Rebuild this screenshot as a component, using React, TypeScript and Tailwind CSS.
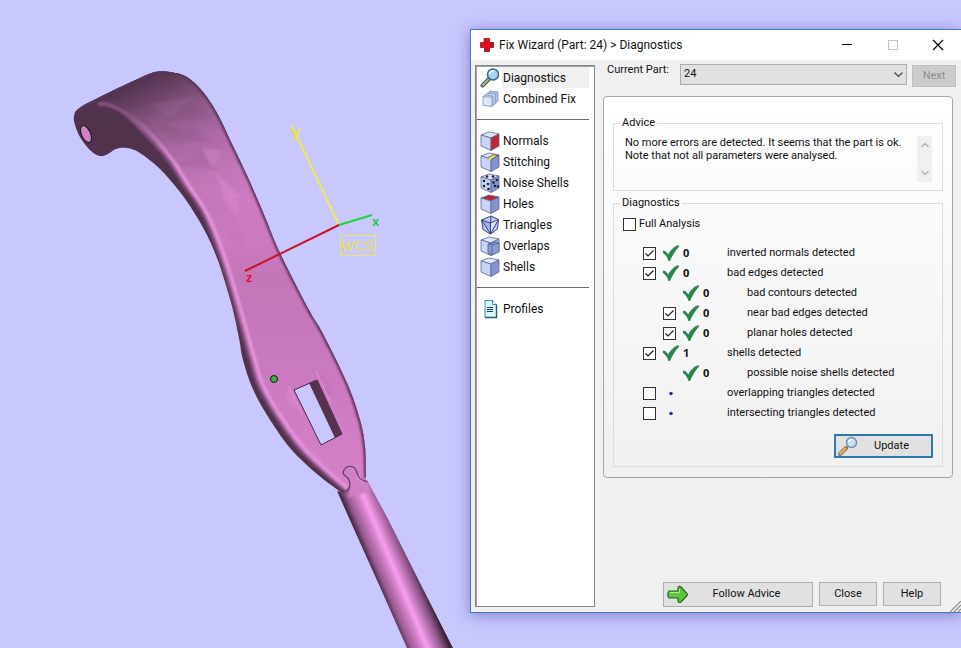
import React from 'react'

type Point = [number, number]

// smooth curve through a list of points
const curve = (points: Point[]) => {
  let d = ''
  for (let i = 0; i < points.length - 1; i++) {
    const a = points[i - 1] || points[i]
    const b = points[i]
    const c = points[i + 1]
    const e = points[i + 2] || c
    d += ` C${b[0] + (c[0] - a[0]) / 6} ${b[1] + (c[1] - a[1]) / 6} ${c[0] - (e[0] - b[0]) / 6} ${c[1] - (e[1] - b[1]) / 6} ${c[0]} ${c[1]}`
  }
  return d
}

const rightEdge: Point[] = [
  [75, 112], [84, 105], [112, 91], [140, 78], [155, 72], [170, 72], [187, 77], [203, 92], [217, 113], [233, 146],
  [250, 182], [265, 217], [280, 253], [309, 310], [322, 332], [347, 383], [360, 420], [365, 447], [366, 478],
]

const leftEdge: Point[] = [
  [342, 493], [317, 474], [290, 448], [267, 415], [252, 387], [243, 360], [239, 338], [233, 310], [225, 282],
  [217, 258], [207, 235], [195, 214], [180, 192], [160, 169], [140, 153], [127, 148], [116, 149], [108, 154],
  [100, 156], [91, 151], [80, 137], [74, 121], [75, 112],
]

const ridge: Point[] = [
  [98, 104], [109, 105], [123, 112], [139, 127], [156, 145], [170, 162], [185, 186], [201, 209], [213, 236],
  [224, 267], [234, 300], [242, 329], [251, 361], [259, 386], [276, 416], [299, 448], [326, 474], [345, 490],
]

const ridgeLight: Point[] = [
  [118, 107], [130, 114], [143, 126], [159, 143], [174, 162], [188, 184], [205, 210], [217, 236], [228, 267],
  [238, 300], [246, 328], [255, 360], [263, 385], [280, 415], [303, 447], [330, 473], [347, 488],
]

const bodyPath = `M75 112${curve(rightEdge)} L342 493${curve(leftEdge)} Z`
const facePath = `M98 104${curve(ridge)} L366 478${curve([...rightEdge.slice(2)].reverse())} Z`

const ModelView = () => {
  return (
    <svg
      className="absolute inset-0 h-full w-full"
      viewBox="0 0 961 648"
      preserveAspectRatio="xMinYMin slice"
      role="img"
      aria-label="3D part view"
    >
      <defs>
        <linearGradient id="face" gradientUnits="userSpaceOnUse" x1="136" y1="80" x2="206" y2="224">
          <stop offset="0" stopColor="#50324e" />
          <stop offset="0.12" stopColor="#664062" />
          <stop offset="0.3" stopColor="#8e5888" />
          <stop offset="0.5" stopColor="#ab68a3" />
          <stop offset="0.75" stopColor="#c276b8" />
          <stop offset="1" stopColor="#cd7bc2" />
        </linearGradient>
        <linearGradient id="lower" gradientUnits="userSpaceOnUse" x1="0" y1="210" x2="0" y2="480">
          <stop offset="0" stopColor="#cd7bc2" stopOpacity="0" />
          <stop offset="0.25" stopColor="#c376b8" />
          <stop offset="0.65" stopColor="#cb7ac1" />
          <stop offset="1" stopColor="#d581ca" />
        </linearGradient>
        <linearGradient id="ridgeFade" gradientUnits="userSpaceOnUse" x1="118" y1="107" x2="175" y2="165">
          <stop offset="0" stopColor="#8a5685" stopOpacity="0" />
          <stop offset="0.5" stopColor="#b672ae" />
          <stop offset="1" stopColor="#e797dc" />
        </linearGradient>
        <linearGradient id="rod" gradientUnits="userSpaceOnUse" x1="368" y1="560" x2="406" y2="544">
          <stop offset="0" stopColor="#4a2c47" />
          <stop offset="0.14" stopColor="#9a5c94" />
          <stop offset="0.36" stopColor="#d07fc6" />
          <stop offset="0.5" stopColor="#f89ff0" />
          <stop offset="0.6" stopColor="#dc88d2" />
          <stop offset="0.84" stopColor="#8b5488" />
          <stop offset="1" stopColor="#3c2439" />
        </linearGradient>
        <filter id="soft" x="-20%" y="-20%" width="140%" height="140%">
          <feGaussianBlur stdDeviation="1" />
        </filter>
        <clipPath id="bodyClip">
          <path d={bodyPath} />
        </clipPath>
        <clipPath id="faceClip">
          <path d={facePath} />
        </clipPath>
      </defs>

      <path d={bodyPath} fill="#50324d" />

      {/* arm face */}
      <g clipPath="url(#faceClip)">
        <rect x="70" y="60" width="310" height="440" fill="url(#face)" />
        <rect x="70" y="210" width="310" height="290" fill="url(#lower)" />
        <g filter="url(#soft)">
          <path d="M150 104 L198 96 L170 118 Z" fill="#c881bf" opacity="0.12" />
          <path d="M164 120 L188 101 L214 118 Z" fill="#512f4e" opacity="0.08" />
          <path d="M158 126 L190 130 L176 142 Z" fill="#552f50" opacity="0.1" />
          <path d="M178 142 L192 128 L211 142 Z" fill="#5d3658" opacity="0.12" />
          <path d="M180 165 L202 150 L216 170 Z" fill="#5d3658" opacity="0.1" />
          <path d="M202 148 L222 151 L212 168 Z" fill="#f3a6e9" opacity="0.18" />
          <path d="M215 172 L226 202 L240 196 Z" fill="#f3a6e9" opacity="0.22" />
          <path d="M226 202 L240 196 L236 218 Z" fill="#f3a6e9" opacity="0.14" />
          <path d="M205 200 L222 198 L236 217 L218 232 Z" fill="#8c5485" opacity="0.08" />
          <path d="M236 217 L226 236 L246 248 Z" fill="#8c5485" opacity="0.08" />
        </g>
      </g>

      {/* rounded edges */}
      <g clipPath="url(#bodyClip)" fill="none">
        <path d={`M98 104${curve(ridge)}`} stroke="#8f5889" strokeWidth="4" filter="url(#soft)" opacity="0.8" />
        <path d={`M118 107${curve(ridgeLight)}`} stroke="url(#ridgeFade)" strokeWidth="3" filter="url(#soft)" />
        <path d={`M75 112${curve(rightEdge)}`} stroke="#59375a" strokeWidth="4" filter="url(#soft)" />
      </g>
      <ellipse cx="86" cy="134" rx="4.500" ry="9" transform="rotate(-24 86 134)" fill="#cf7fc5" stroke="#1e101d" />

      {/* slot */}
      <path d="M289 386 L301 415 L297 408 C287 407 284 396 289 386 Z" fill="#dd8ad2" opacity="0.5" filter="url(#soft)" />
      <path d="M317 373 L328 396 C338 390 331 378 317 373 Z" fill="#b96db0" opacity="0.3" filter="url(#soft)" />
      <path d="M289 386 L302 415 M316 371 L331 403" stroke="#e79adf" strokeWidth="1" opacity="0.8" />
      <path d="M294 390 L317 380 L342 434 L321 445 Z" fill="#c8c8ff" stroke="#452742" />
      <path d="M309 383 L317 380 L342 434 L335 438 Z" fill="#57324f" />

      {/* rod */}
      <path d="M337 491 L345 493 L350 484 L357 475 L367 480 L387 517 L420 583 L453 648 L407 648 L380 587 L353 527 Z" fill="url(#rod)" />
      <path d="M345 474 C346 467 354 466 356 474 C357 480 361 483 367 482 L371 491 L348 498 C351 490 353 482 345 474 Z" fill="#cf80c5" filter="url(#soft)" />
      <path d="M342 493 C350 492 351 485 349 480 C347 476 344 476 343 473 C345 464 355 464 357 473 C358 479 362 480 367 482" fill="none" stroke="#613a5d" strokeWidth="1.200" />

      {/* picked point */}
      <circle cx="274" cy="379" r="3.500" fill="#3fae49" stroke="#0b230c" />

      {/* coordinate system */}
      <path d="M339 225 L292 126" stroke="#f2ea52" strokeWidth="2" />
      <path d="M339 225 L372 215" stroke="#1fd43a" strokeWidth="2" />
      <path d="M339 225 L245 271" stroke="#c8142c" strokeWidth="2" />
      <rect x="340.500" y="235.500" width="35" height="20" fill="none" stroke="#eee65c" />
      <g fontFamily="'Liberation Sans', sans-serif">
        <text x="292" y="137" fontSize="15" fontWeight="bold" fill="#eee34a">y</text>
        <text x="372" y="226" fontSize="13" fontWeight="bold" fill="#22cc38">x</text>
        <text x="246" y="282" fontSize="13" fontWeight="bold" fill="#e01432">z</text>
        <text x="341" y="251" fontSize="14" fill="#eae04e">WCS</text>
      </g>
    </svg>
  )
}

const MagnifierIcon = () => (
  <svg className="size-5 shrink-0" viewBox="0 0 20 20" aria-hidden="true">
    <path d="M2.500 17.500 L9 11" stroke="#4f5d4c" strokeWidth="4" strokeLinecap="round" />
    <path d="M2.700 17.200 L8.500 11.400" stroke="#a3b38c" strokeWidth="2" strokeLinecap="round" />
    <circle cx="13" cy="6.500" r="5.500" fill="#a5d3f3" stroke="#3d6790" strokeWidth="1.500" />
    <path d="M9.500 6 C10 3.500 12 2.500 14.500 3" fill="none" stroke="#e8f6ff" strokeWidth="1.500" />
  </svg>
)

const SmallMagnifierIcon = () => (
  <svg className="size-5 shrink-0" viewBox="0 0 20 20" aria-hidden="true">
    <path d="M2 18 L8 12" stroke="#8e6a42" strokeWidth="4" strokeLinecap="round" />
    <path d="M2.200 17.600 L7.500 12.300" stroke="#e5b27a" strokeWidth="2.200" strokeLinecap="round" />
    <circle cx="13.500" cy="6.500" r="5" fill="#c5e2f2" stroke="#718ea6" strokeWidth="1.400" />
    <path d="M10.500 6 C11 4 12.500 3.200 14.500 3.700" fill="none" stroke="#fff" strokeWidth="1.200" />
  </svg>
)

const CombinedIcon = () => (
  <svg className="size-5 shrink-0" viewBox="0 0 20 20" aria-hidden="true">
    <g stroke="#7d90bb" strokeWidth="0.800">
      <path d="M8 4 L10 2 L18 3 L18 12 L16 14 L8 13 Z" fill="#aebfe8" />
      <path d="M5.500 5.500 L7 4 L15.500 5 L15.500 14 L14 16 L5.500 15 Z" fill="#c4d2f2" />
      <path d="M3 7.500 L4.500 6 L13 7 L13 16 L12 17.500 L3 16.500 Z" fill="#dbe6fb" />
      <path d="M3 7.500 L12 8.300 L12 17.500 M12 8.300 L13 7" fill="none" />
    </g>
  </svg>
)

type CubeProps = {
  top?: string
  left?: string
  right?: string
  children?: React.ReactNode
}

const Cube = ({ top = '#dfe6fa', left = '#c9d3f5', right = '#8492d2', children }: CubeProps) => (
  <svg className="size-5 shrink-0" viewBox="0 0 20 20" aria-hidden="true">
    <g stroke="#5c688f" strokeWidth="0.800" strokeLinejoin="round">
      <path d="M1 4 L9 1 L19 3 L11 7 Z" fill={top} />
      <path d="M1 4 L11 7 L11 19.500 L1 15 Z" fill={left} />
      <path d="M11 7 L19 3 L19 15 L11 19.500 Z" fill={right} />
    </g>
    {children}
  </svg>
)

const NoiseDots = () => (
  <g fill="#1d2238">
    <circle cx="4" cy="8" r="1.300" />
    <circle cx="8" cy="11" r="1.300" />
    <circle cx="4" cy="13" r="1.300" />
    <circle cx="8.500" cy="16" r="1.300" />
    <circle cx="7" cy="3.500" r="1.300" />
    <circle cx="13" cy="3.500" r="1.300" />
    <circle cx="13.500" cy="9.500" r="1.300" />
    <circle cx="17" cy="7" r="1.300" />
    <circle cx="15" cy="13" r="1.300" />
    <circle cx="18" cy="13.500" r="1.200" />
  </g>
)

const TrianglesIcon = () => (
  <svg className="size-5 shrink-0" viewBox="0 0 20 20" aria-hidden="true">
    <g stroke="#39418c" strokeWidth="1" strokeLinejoin="round">
      <path d="M1.500 5 L11 1 L18.500 4.500 L17.500 14 L10.500 19 L3 14.500 Z" fill="#c1c9f5" />
      <path d="M1.500 5 L10.500 8 L10.500 19 Z" fill="#a4aeea" />
      <path d="M18.500 4.500 L10.500 8 L10.500 19 Z" fill="#dfe3fc" />
      <path d="M11 1 L10.500 8" />
    </g>
  </svg>
)

const ProfilesIcon = () => (
  <svg className="size-5 shrink-0" viewBox="0 0 20 20" aria-hidden="true">
    <path d="M5 1.500 H12.500 L16.500 5.500 V18.500 H5 Z" fill="#d9f5fb" stroke="#3b8ea3" />
    <path d="M16.500 5.500 V18.500 H5" fill="none" stroke="#22606f" strokeWidth="1.400" />
    <path d="M12.500 1.500 V5.500 H16.500" fill="#fff" stroke="#3b8ea3" />
    <path d="M7 8.500 H13 M7 10.500 H13 M7 12.500 H13" stroke="#23404f" />
  </svg>
)

const OkMark = () => (
  <svg className="h-[18px] w-[18px] shrink-0" viewBox="0 0 18 18" aria-hidden="true">
    <path d="M1 6.500 L3.500 7.200 L6.500 10.500 C8.500 6.500 12 2.500 16.500 1.500 L16.800 3 C13 7 10.500 11.500 8 17 L6.500 17 C5.500 13 3 10.500 1 9 Z" fill="#26884c" />
    <path d="M6.500 10.500 C8.500 6.500 12 2.500 16.500 1.500 L16.800 3" fill="none" stroke="#5d7d6a" strokeWidth="0.800" />
  </svg>
)

const Dot = () => (
  <svg className="h-[18px] w-[18px] shrink-0" viewBox="0 0 18 18" aria-hidden="true">
    <circle cx="9" cy="9.500" r="1.800" fill="#2a2f9e" />
  </svg>
)

const CheckBox = ({ id, checked }: { id: string; checked?: boolean }) => (
  <span className="grid size-[13px] shrink-0">
    <input
      id={id}
      type="checkbox"
      defaultChecked={checked}
      className="peer col-start-1 row-start-1 size-[13px] appearance-none border border-[#333333] bg-white"
    />
    <svg
      className="pointer-events-none invisible col-start-1 row-start-1 size-[13px] peer-checked:visible"
      viewBox="0 0 13 13"
      aria-hidden="true"
    >
      <path d="M2.500 6.500 L5 9 L10.500 3.500" fill="none" stroke="#222" strokeWidth="1.200" />
    </svg>
  </span>
)

const navGroups = [
  [
    { label: 'Diagnostics', icon: <MagnifierIcon />, active: true },
    { label: 'Combined Fix', icon: <CombinedIcon /> },
  ],
  [
    { label: 'Normals', icon: <Cube right="#c32430" /> },
    {
      label: 'Stitching',
      icon: (
        <Cube>
          <path d="M8 5.500 L14 2.500 L18 3.500 L12 7 L11 9" fill="#e8dc8e" stroke="#5c5a36" strokeWidth="0.900" />
        </Cube>
      ),
    },
    {
      label: 'Noise Shells',
      icon: (
        <Cube>
          <NoiseDots />
        </Cube>
      ),
    },
    { label: 'Holes', icon: <Cube top="#b82433" /> },
    { label: 'Triangles', icon: <TrianglesIcon /> },
    {
      label: 'Overlaps',
      icon: (
        <Cube right="#a9b8e4">
          <path d="M8 8 L16 6 L19 7 V16 L12 19 L8 17 Z" fill="#8b9bd4" stroke="#4f5f94" strokeWidth="0.800" />
          <path d="M8 8 L12 9 L19 7 M12 9 V19" fill="none" stroke="#4f5f94" strokeWidth="0.800" />
        </Cube>
      ),
    },
    { label: 'Shells', icon: <Cube /> },
  ],
  [{ label: 'Profiles', icon: <ProfilesIcon /> }],
]

const Sidebar = () => {
  return (
    <nav className="mt-px w-[120px] shrink-0 border border-[#828790] bg-white py-px pr-[5px] pl-px text-[12px] shadow-[inset_1px_1px_0_#a0a0a0]">
      {navGroups.map((group, index) => (
        <React.Fragment key={index}>
          {index > 0 && (
            <div className="flex h-[21px] items-center">
              <hr className="w-full border-t border-[#6a6a6a]" />
            </div>
          )}
          <ul>
            {group.map((item) => (
              <li key={item.label}>
                <button type="button" className="flex h-[21px] w-full items-center pl-[3px] text-left">
                  {item.icon}
                  <span
                    className={
                      item.active
                        ? 'ml-0.5 flex h-full flex-1 items-center bg-[#f0f0f0] pl-px'
                        : 'ml-0.5 flex h-full flex-1 items-center pl-px whitespace-nowrap'
                    }
                  >
                    {item.label}
                  </span>
                </button>
              </li>
            ))}
          </ul>
        </React.Fragment>
      ))}
    </nav>
  )
}

const checks = [
  { id: 'inverted', label: 'inverted normals detected', count: '0', box: true, checked: true },
  { id: 'bad-edges', label: 'bad edges detected', count: '0', box: true, checked: true },
  { id: 'contours', label: 'bad contours detected', count: '0', nested: true },
  { id: 'near', label: 'near bad edges detected', count: '0', box: true, checked: true, nested: true },
  { id: 'planar', label: 'planar holes detected', count: '0', box: true, checked: true, nested: true },
  { id: 'shells', label: 'shells detected', count: '1', box: true, checked: true },
  { id: 'noise', label: 'possible noise shells detected', count: '0', nested: true },
  { id: 'overlapping', label: 'overlapping triangles detected', box: true },
  { id: 'intersecting', label: 'intersecting triangles detected', box: true },
]

const DiagnosticsGroup = () => {
  return (
    <fieldset className="mt-1 border border-[#dcdcdc] pb-2">
      <legend className="ml-1.5 px-0.5 leading-4">Diagnostics</legend>
      <div className="mt-[5px] flex h-4 items-center gap-[3px] pl-[9px]">
        <CheckBox id="full" />
        <label htmlFor="full">Full Analysis</label>
      </div>
      <ul className="mt-[11px]">
        {checks.map((row) => (
          <li
            key={row.id}
            className={row.nested ? 'flex h-5 items-center pl-[49px]' : 'flex h-5 items-center pl-[29px]'}
          >
            {row.box ? <CheckBox id={row.id} checked={row.checked} /> : <span className="w-[13px]" />}
            <span className="ml-1.5 flex">{row.count ? <OkMark /> : <Dot />}</span>
            <b className="ml-[3px] w-11 font-['Open_Sans','Noto_Sans',sans-serif]">{row.count}</b>
            {row.box ? <label htmlFor={row.id}>{row.label}</label> : <span>{row.label}</span>}
          </li>
        ))}
      </ul>
      <div className="mt-[11px] flex justify-end pr-[9px]">
        <button
          type="button"
          className="flex h-6 w-[99px] items-center border-2 border-[#2a7ab0] bg-[#e1e1e1] pl-0.5"
        >
          <SmallMagnifierIcon />
          <span className="flex-1 pr-1.5 text-center">Update</span>
        </button>
      </div>
    </fieldset>
  )
}

const AdviceGroup = () => {
  return (
    <fieldset className="border border-[#dcdcdc] pb-2">
      <legend className="ml-1.5 px-0.5 leading-4">Advice</legend>
      <div className="flex items-start justify-between pt-[5px] pr-2.5 pl-[11px]">
        <p className="leading-[13px] whitespace-nowrap">
          No more errors are detected. It seems that the part is ok.
          <br />
          Note that not all parameters were analysed.
        </p>
        <div className="flex h-[46px] w-[15px] shrink-0 flex-col items-center justify-between bg-[#f0f0f0] py-1.5">
          <button type="button" aria-label="Scroll up">
            <svg className="h-1.5 w-2" viewBox="0 0 8 6" aria-hidden="true">
              <path d="M0.500 5 L4 1.500 L7.500 5" fill="none" stroke="#b4b4b4" strokeWidth="1.500" />
            </svg>
          </button>
          <button type="button" aria-label="Scroll down">
            <svg className="h-1.5 w-2" viewBox="0 0 8 6" aria-hidden="true">
              <path d="M0.500 1 L4 4.500 L7.500 1" fill="none" stroke="#b4b4b4" strokeWidth="1.500" />
            </svg>
          </button>
        </div>
      </div>
    </fieldset>
  )
}

const TitleBar = () => {
  return (
    <header className="flex h-[30px] items-center bg-white pl-2 text-[12px]">
      <svg className="size-4" viewBox="0 0 16 16" aria-hidden="true">
        <path d="M5 1.500 H10.500 V5.500 H14.500 V10.500 H10.500 V14.500 H5.500 V10.500 H1.500 V5.500 H5 Z" fill="#e01018" stroke="#a81016" strokeWidth="0.800" />
        <path d="M10.500 10.500 V14.500 H5.500 V10.500 Z M10.500 5.500 H14.500 V10.500 H10.500 Z" fill="#9c1420" opacity="0.500" />
      </svg>
      <h1 className="ml-1 flex-1 whitespace-nowrap">Fix Wizard (Part: 24) &gt; Diagnostics</h1>
      <button type="button" aria-label="Minimize" className="flex w-[46px] justify-center">
        <svg className="size-3" viewBox="0 0 12 12" aria-hidden="true">
          <path d="M1 5.500 H11" stroke="#000" />
        </svg>
      </button>
      <button type="button" aria-label="Maximize" disabled className="flex w-[45px] justify-center">
        <svg className="size-3" viewBox="0 0 12 12" aria-hidden="true">
          <rect x="1.500" y="1.500" width="9" height="9" fill="none" stroke="#c4c4c4" />
        </svg>
      </button>
      <button type="button" aria-label="Close window" className="flex w-[46px] justify-center">
        <svg className="size-3" viewBox="0 0 12 12" aria-hidden="true">
          <path d="M1 1 L11 11 M11 1 L1 11" stroke="#000" strokeWidth="1.200" />
        </svg>
      </button>
    </header>
  )
}

const Footer = () => {
  return (
    <footer className="mt-auto flex items-start justify-end gap-1.5 pr-5">
      <button type="button" className="flex h-[25px] w-[150px] items-center border border-[#adadad] bg-[#e1e1e1] pl-[3px]">
        <svg className="size-[22px] shrink-0" viewBox="0 0 22 22" aria-hidden="true">
          <path
            d="M2 7 H11 V4.500 C11 2 13 2 14 3 L20 9.500 C20.600 10.500 20.600 11 20 11.500 L14 18 C12.500 19 11 18.500 11 16.500 V14 H2 C0.500 13 0.500 8 2 7 Z"
            fill="#5cc73c"
            stroke="#22651c"
            strokeWidth="1.200"
          />
          <path d="M3 8.500 H12.500 V5" fill="none" stroke="#b1ee93" strokeWidth="1" />
        </svg>
        <span className="flex-1 pr-2 text-center">Follow Advice</span>
      </button>
      <button type="button" className="h-6 w-[58px] border border-[#adadad] bg-[#e1e1e1]">Close</button>
      <button type="button" className="h-6 w-[58px] border border-[#adadad] bg-[#e1e1e1]">Help</button>
    </footer>
  )
}

const FixWizard = () => {
  return (
    <section className="relative flex h-[584px] w-[491px] flex-col border border-r-0 border-[#3f7cb8] bg-[#f0f0f0] font-[Roboto,'Noto_Sans',sans-serif] text-[11px] text-[#111111] shadow-[0_2px_14px_rgba(70,50,150,0.5)]">
      <TitleBar />
      <div className="flex flex-1 gap-2 pt-1 pb-[5px] pl-1">
        <Sidebar />
        <div className="flex flex-1 flex-col">
          <div className="flex items-start pr-[5px] pl-1">
            <label htmlFor="part" className="w-[73px] leading-3 whitespace-nowrap">
              Current Part:
            </label>
            <div className="grid flex-1">
              <select
                id="part"
                defaultValue="24"
                className="col-start-1 row-start-1 h-[21px] w-full appearance-none border border-[#adadad] bg-[#e1e1e1] pl-[3px]"
              >
                <option>24</option>
              </select>
              <svg
                className="pointer-events-none col-start-1 row-start-1 mr-1 h-[9px] w-[9px] self-center justify-self-end"
                viewBox="0 0 9 9"
                aria-hidden="true"
              >
                <path d="M0.500 2.500 L4.500 6.500 L8.500 2.500" fill="none" stroke="#444" strokeWidth="1.200" />
              </svg>
            </div>
            <button
              type="button"
              disabled
              className="mt-px ml-[5px] h-[22px] w-11 border border-[#bfbfbf] bg-[#cccccc] text-[#8d8d8d]"
            >
              Next
            </button>
          </div>
          <div className="mt-[9px] mr-2 rounded-sm border border-[#a6a6a6] bg-linear-to-b from-white to-[#f0f0f0] px-[9px] pt-[18px] pb-2.5">
            <AdviceGroup />
            <DiagnosticsGroup />
          </div>
          <Footer />
        </div>
      </div>
      <svg className="absolute right-0 bottom-0 size-[11px]" viewBox="0 0 11 11" aria-hidden="true">
        <path d="M0 11 L11 0 M4 11 L11 4 M8 11 L11 8" stroke="#8a8a8a" strokeWidth="1.200" />
      </svg>
    </section>
  )
}

const App = () => {
  return (
    <main className="relative flex min-h-screen items-start justify-end overflow-hidden bg-[#c8c8ff] pt-[29px]">
      <ModelView />
      <FixWizard />
    </main>
  )
}

export default App
